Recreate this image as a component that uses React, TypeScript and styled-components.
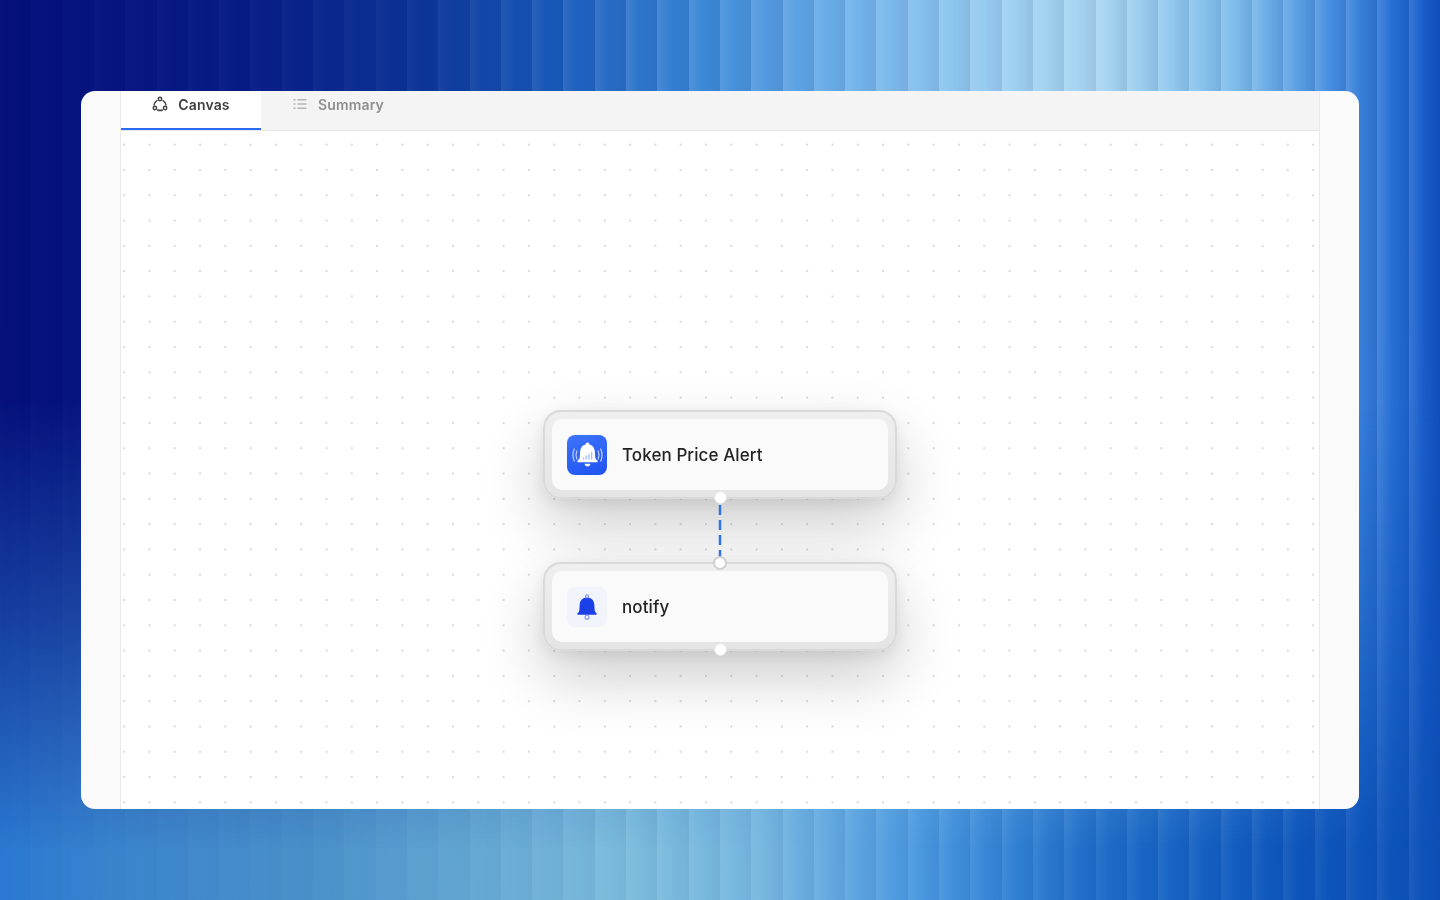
import React from 'react';
import styled, { createGlobalStyle } from 'styled-components';

const GlobalStyle = createGlobalStyle`
  html, body {
    margin: 0;
    padding: 0;
    height: 100%;
  }
  body {
    font-family: Inter, "Liberation Sans", sans-serif;
    overflow: hidden;
  }
`;

const Page = styled.div`
  position: relative;
  height: 100vh;
  display: flex;
  align-items: center;
  justify-content: center;
  background: linear-gradient(
    90deg,
    #2a78d2 0,
    #3b84cc 120px,
    #4a92ca 320px,
    #7cbcdc 620px,
    #78b8e0 760px,
    #4a98e0 920px,
    #1c6cc8 1100px,
    #0e56bc 1300px,
    #0e52ba 1440px
  );

  /* top colour band, fades into the lower one */
  &::before {
    content: '';
    position: absolute;
    inset: 0;
    background: linear-gradient(
      90deg,
      #05107a 0,
      #081c88 250px,
      #0c3498 420px,
      #1a5cbc 560px,
      #3a88d8 700px,
      #6cb0ea 840px,
      #9ccff2 1000px,
      #a8d6f2 1100px,
      #7cbcec 1240px,
      #4890e0 1330px,
      #256cd4 1400px,
      #1254c4 1440px
    );
    mask-image: linear-gradient(180deg, #000 0, #000 400px, rgba(0, 0, 0, 0.55) 620px, transparent 850px);
  }

  /* folded glass stripes */
  &::after {
    content: '';
    position: absolute;
    inset: 0;
    background: repeating-linear-gradient(
      90deg,
      rgba(255, 255, 255, 0.12) 0,
      rgba(255, 255, 255, 0) 14px,
      rgba(0, 0, 60, 0.08) 31.3px
    );
    mask-image: linear-gradient(90deg, rgba(0, 0, 0, 0.08) 0, rgba(0, 0, 0, 0.35) 420px, #000 640px),
      linear-gradient(180deg, #000 0, #000 300px, rgba(0, 0, 0, 0.5) 900px);
    mask-composite: intersect;
  }
`;

const Window = styled.div`
  position: relative;
  z-index: 1;
  width: 1278px;
  height: 718px;
  box-sizing: border-box;
  padding: 0 39px;
  border-radius: 14px;
  background: #fafafa;
  overflow: hidden;
`;

const Workspace = styled.div`
  height: 100%;
  display: flex;
  flex-direction: column;
  border-left: 1px solid #e9e9e9;
  border-right: 1px solid #e9e9e9;
  background: #fff;
  filter: blur(0.35px);
`;

const TabBar = styled.div`
  display: flex;
  flex: none;
  height: 40px;
  box-sizing: border-box;
  background: #f4f4f4;
  border-bottom: 1px solid #e7e7e7;
`;

const Tab = styled.div<{ $active?: boolean }>`
  width: ${(p) => (p.$active ? '140px' : '154px')};
  height: 39px;
  box-sizing: border-box;
  display: flex;
  align-items: center;
  justify-content: center;
  gap: 10px;
  padding-bottom: 11px;
  font-size: 14px;
  font-weight: 600;
  letter-spacing: 0.15px;
  color: ${(p) => (p.$active ? '#3f3f3f' : '#8f8f8f')};
  background: ${(p) => (p.$active ? '#fff' : 'transparent')};
  border-bottom: 2px solid ${(p) => (p.$active ? '#2b6bf0' : 'transparent')};
`;

const TabIcon = styled.svg`
  width: 16px;
  height: 16px;
  flex: none;
`;

const Canvas = styled.div`
  position: relative;
  flex: 1;
  background-color: #fff;
  background-image: radial-gradient(circle at center, #cfcfcf 0.6px, transparent 1px);
  background-size: 25.3px 25.3px;
  background-position: -9.5px 1px;
`;

const Node = styled.div<{ $top: number }>`
  position: absolute;
  left: 422px;
  top: ${(p) => p.$top}px;
  width: 354px;
  height: 89px;
  box-sizing: border-box;
  padding: 7px;
  border: 2px solid #d9d9d9;
  border-radius: 18px;
  background: linear-gradient(180deg, #efefef, #e4e4e4);
  box-shadow: 0 26px 62px rgba(0, 0, 0, 0.2), 0 4px 14px rgba(0, 0, 0, 0.07);
`;

const NodeBody = styled.div`
  height: 100%;
  display: flex;
  align-items: center;
  gap: 15px;
  padding-left: 15px;
  border-radius: 10px;
  background: #fafafa;
`;

const IconTile = styled.div<{ $solid?: boolean }>`
  width: 40px;
  height: 40px;
  flex: none;
  display: flex;
  align-items: center;
  justify-content: center;
  border-radius: 8px;
  background: ${(p) => (p.$solid ? 'linear-gradient(160deg, #3d74fa, #1f52f0)' : '#f2f4fb')};
`;

const NodeTitle = styled.span`
  font-size: 17px;
  font-weight: 500;
  letter-spacing: 0.08px;
  color: #232323;
`;

const Handle = styled.span<{ $top: number; $ring?: boolean }>`
  position: absolute;
  left: ${(p) => (p.$ring ? '592px' : '592.5px')};
  top: ${(p) => p.$top}px;
  width: ${(p) => (p.$ring ? '14px' : '13px')};
  height: ${(p) => (p.$ring ? '14px' : '13px')};
  box-sizing: border-box;
  border-radius: 50%;
  background: #fff;
  border: ${(p) => (p.$ring ? '2px solid #d0d0d0' : '1px solid #e6e6e6')};
  z-index: 2;
`;

const Edge = styled.svg`
  position: absolute;
  left: 595px;
  top: 374px;
  width: 8px;
  height: 52px;
  z-index: 1;
`;

const CanvasIcon = () => (
  <TabIcon viewBox="0 0 16 16" fill="none" stroke="#3f3f3f" strokeWidth="1.4" strokeLinecap="round">
    <circle cx="8" cy="3" r="1.7" />
    <circle cx="2.9" cy="12" r="1.7" />
    <circle cx="13.1" cy="12" r="1.7" />
    <path d="M5 4.6A6.4 6.4 0 0 0 2 8.8" />
    <path d="M11 4.6a6.4 6.4 0 0 1 3 4.2" />
    <path d="M5.6 14a6.4 6.4 0 0 0 4.8 0" />
  </TabIcon>
);

const SummaryIcon = () => (
  <TabIcon viewBox="0 0 16 16" fill="none" stroke="#b4b4b4" strokeWidth="1.4">
    <path d="M5.5 3.7h9M5.5 8h9M5.5 12.3h9" />
    <path d="M1.5 3.7h2M1.5 8h2M1.5 12.3h2" />
  </TabIcon>
);

const AlertBell = () => (
  <svg width="34" height="34" viewBox="0 0 34 34">
    <path
      d="M17.5 4.6c1.2 0 2 .8 2 1.9 3.6.9 5.2 3.8 5.4 7.6l.3 5c.1 1.5.9 2.6 2.2 3.6.7.5.4 1.6-.5 1.6H8.100c-.9 0-1.2-1.100-.5-1.600 1.300-1 2.100-2.100 2.200-3.600l.3-5c.2-3.800 1.800-6.700 5.400-7.600 0-1.100.8-1.900 2-1.900Z"
      fill="#fff"
    />
    <path d="M14.500 25.800h6c-.3 1.600-1.500 2.700-3 2.700s-2.700-1.100-3-2.700Z" fill="#fff" />
    <path
      d="M13.500 21.500v-2M16.200 21.500v-4M18.900 21.500v-5.500M21.600 21.500v-7.500"
      stroke="#a9c0fc"
      strokeWidth="1.400"
      fill="none"
    />
    <path
      d="M6.800 13c-1.100 2.700-1.100 5.300 0 8M4.200 11c-1.600 4-1.600 8 0 12M28.200 13c1.100 2.700 1.100 5.300 0 8M30.800 11c1.600 4 1.600 8 0 12"
      stroke="#b9cbfd"
      strokeWidth="1.300"
      fill="none"
      strokeLinecap="round"
    />
  </svg>
);

const NotifyBell = () => (
  <svg width="24" height="28" viewBox="0 0 24 28">
    <path
      d="M12 4.500c4.600 0 7 3 7.300 7l.3 5c.1 1.700.8 2.800 1.900 3.800.6.500.3 1.500-.5 1.500H3c-.8 0-1.100-1-.5-1.500 1.100-1 1.800-2.100 1.900-3.800l.3-5c.3-4 2.700-7 7.300-7Z"
      fill="#1b40e8"
    />
    <circle cx="12" cy="3.400" r="1.500" fill="none" stroke="#7f93ee" strokeWidth="1.100" />
    <circle cx="12" cy="24.300" r="2" fill="none" stroke="#7f93ee" strokeWidth="1.100" />
  </svg>
);

export default function App() {
  return (
    <>
      <GlobalStyle />
      <Page>
        <Window>
          <Workspace>
            <TabBar>
              <Tab $active>
                <CanvasIcon />
                Canvas
              </Tab>
              <Tab>
                <SummaryIcon />
                Summary
              </Tab>
            </TabBar>
            <Canvas>
              <Node $top={279}>
                <NodeBody>
                  <IconTile $solid>
                    <AlertBell />
                  </IconTile>
                  <NodeTitle>Token Price Alert</NodeTitle>
                </NodeBody>
              </Node>
              <Node $top={431}>
                <NodeBody>
                  <IconTile>
                    <NotifyBell />
                  </IconTile>
                  <NodeTitle>notify</NodeTitle>
                </NodeBody>
              </Node>
              <Edge viewBox="0 0 8 52">
                <line x1="4" y1="0" x2="4" y2="52" stroke="#2f74e0" strokeWidth="2.500" strokeDasharray="10 5" />
              </Edge>
              <Handle $top={360} />
              <Handle $top={425} $ring />
              <Handle $top={512} />
            </Canvas>
          </Workspace>
        </Window>
      </Page>
    </>
  );
}
